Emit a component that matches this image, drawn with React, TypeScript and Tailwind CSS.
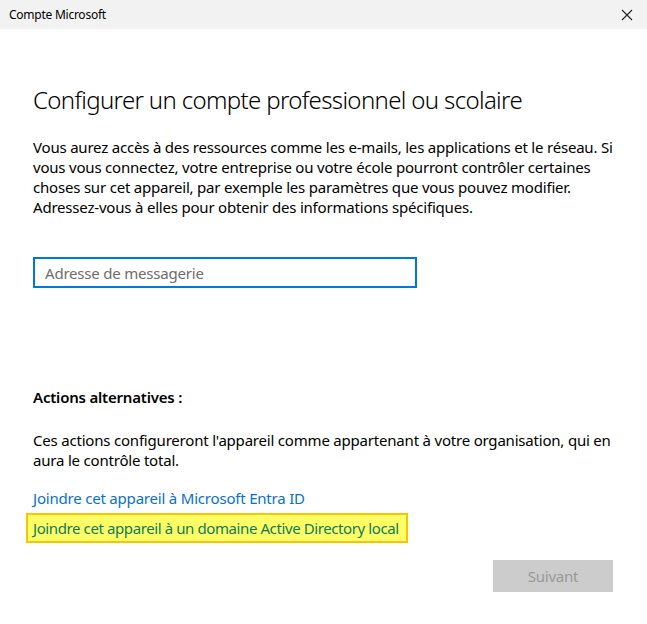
import React from 'react';

export default function App() {
  return (
    <div className="w-[647px] h-[624px] bg-white flex flex-col font-['Noto_Sans',sans-serif] text-black overflow-hidden">
      {/* Title bar */}
      <div className="h-[29px] bg-[#f2f2f2] flex items-center justify-between pl-[9px] pr-[14px] shrink-0">
        <span className="text-[12px] tracking-[-0.25px] text-black">Compte Microsoft</span>
        <svg width="12" height="12" viewBox="0 0 12 12" className="text-[#222]">
          <path d="M1 1 L11 11 M11 1 L1 11" stroke="currentColor" strokeWidth="1.1" />
        </svg>
      </div>

      <div className="flex-1 flex flex-col pl-[33px] pr-[20px] tracking-[-0.2px]">
        <h1 className="mt-[55px] text-[24px] font-light leading-[32px] tracking-[-0.65px] text-black">
          Configurer un compte professionnel ou scolaire
        </h1>

        <p className="mt-[21px] text-[15px] leading-[20px] w-[592px]">
          Vous aurez accès à des ressources comme les e-mails, les applications et le réseau. Si vous vous connectez,
          votre entreprise ou votre école pourront contrôler certaines choses sur cet appareil, par exemple les
          paramètres que vous pouvez modifier. Adressez-vous à elles pour obtenir des informations spécifiques.
        </p>

        <input
          type="text"
          placeholder="Adresse de messagerie"
          className="mt-[40px] w-[384px] h-[31px] border-2 border-[#0078d7] px-[10px] text-[15px] tracking-[-0.2px] outline-none placeholder:text-[#6d6d6d]"
        />

        <div className="mt-[99px] text-[15px] font-semibold leading-[20px]">Actions alternatives :</div>

        <p className="mt-[23px] text-[15px] leading-[20px] w-[592px]">
          Ces actions configureront l'appareil comme appartenant à votre organisation, qui en aura le contrôle total.
        </p>

        <a className="mt-[18px] text-[15px] leading-[20px] text-[#0a6fd0] w-fit cursor-pointer">
          Joindre cet appareil à Microsoft Entra ID
        </a>

        <div className="mt-[5px] -ml-[7px] w-[382px] h-[30px] bg-[#ffff66] border-2 border-[#f7c600] flex items-center pl-[5px]">
          <a className="text-[15px] leading-[20px] tracking-[-0.4px] text-[#107a5a] whitespace-nowrap cursor-pointer">
            Joindre cet appareil à un domaine Active Directory local
          </a>
        </div>

        <div className="mt-[17px] flex justify-end pr-[14px]">
          <button className="w-[120px] h-[32px] bg-[#cccccc] text-[15px] text-[#999999]">Suivant</button>
        </div>
      </div>
    </div>
  );
}
